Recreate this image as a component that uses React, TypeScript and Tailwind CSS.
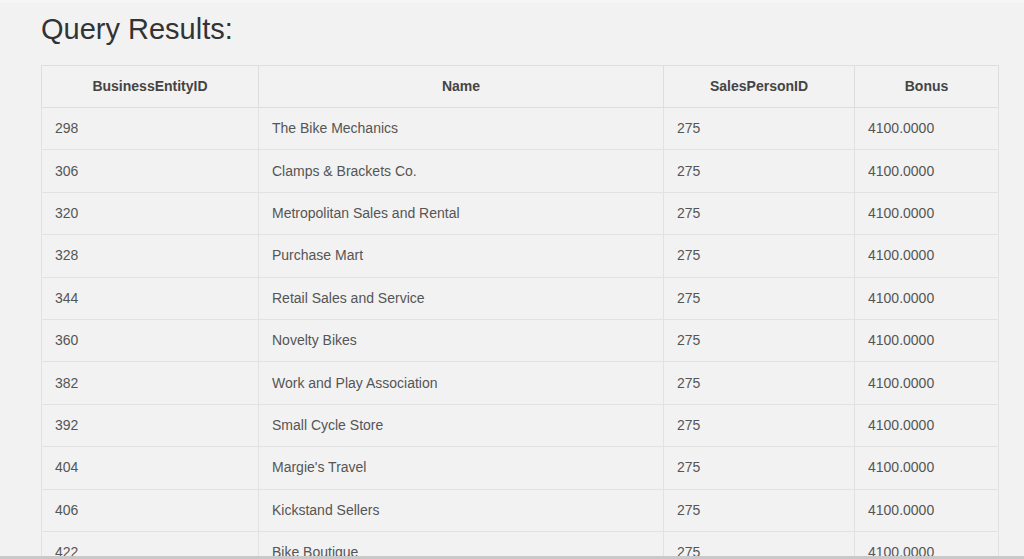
const rows: [string, string][] = [
  ["298", "The Bike Mechanics"],
  ["306", "Clamps & Brackets Co."],
  ["320", "Metropolitan Sales and Rental"],
  ["328", "Purchase Mart"],
  ["344", "Retail Sales and Service"],
  ["360", "Novelty Bikes"],
  ["382", "Work and Play Association"],
  ["392", "Small Cycle Store"],
  ["404", "Margie's Travel"],
  ["406", "Kickstand Sellers"],
  ["422", "Bike Boutique"],
  ["424", "Corner Bicycle Supply"],
];

const App: React.FC = () => {
  const th = "border border-[#dedede] text-center font-bold text-[14px] text-[#444]";
  const td = "border border-[#e2e2e2] px-[13px] text-left align-middle text-[14px] text-[#555]";

  return (
    <div className="h-[559px] overflow-hidden bg-[#f2f2f2] border-b-[3px] border-[#c9c9c9] font-['Liberation_Sans',Arial,sans-serif]">
      <div className="border-t-[3px] border-[#f6f6f6] pl-[41px] pr-[26px]">
        <h1 className="pt-[8px] text-[29px] leading-[36px] text-[#333]">Query Results:</h1>
        <table className="mt-[18px] w-[958px] border-collapse table-fixed">
          <colgroup>
            <col className="w-[217px]" />
            <col className="w-[405px]" />
            <col className="w-[191px]" />
            <col className="w-[144px]" />
          </colgroup>
          <thead>
            <tr className="h-[42px]">
              <th className={th}>BusinessEntityID</th>
              <th className={th}>Name</th>
              <th className={th}>SalesPersonID</th>
              <th className={th}>Bonus</th>
            </tr>
          </thead>
          <tbody>
            {rows.map(([id, name]) => (
              <tr key={id} className="h-[42.4px]">
                <td className={td}>{id}</td>
                <td className={td}>{name}</td>
                <td className={td}>275</td>
                <td className={td}>4100.0000</td>
              </tr>
            ))}
          </tbody>
        </table>
      </div>
    </div>
  );
};

export default App;
